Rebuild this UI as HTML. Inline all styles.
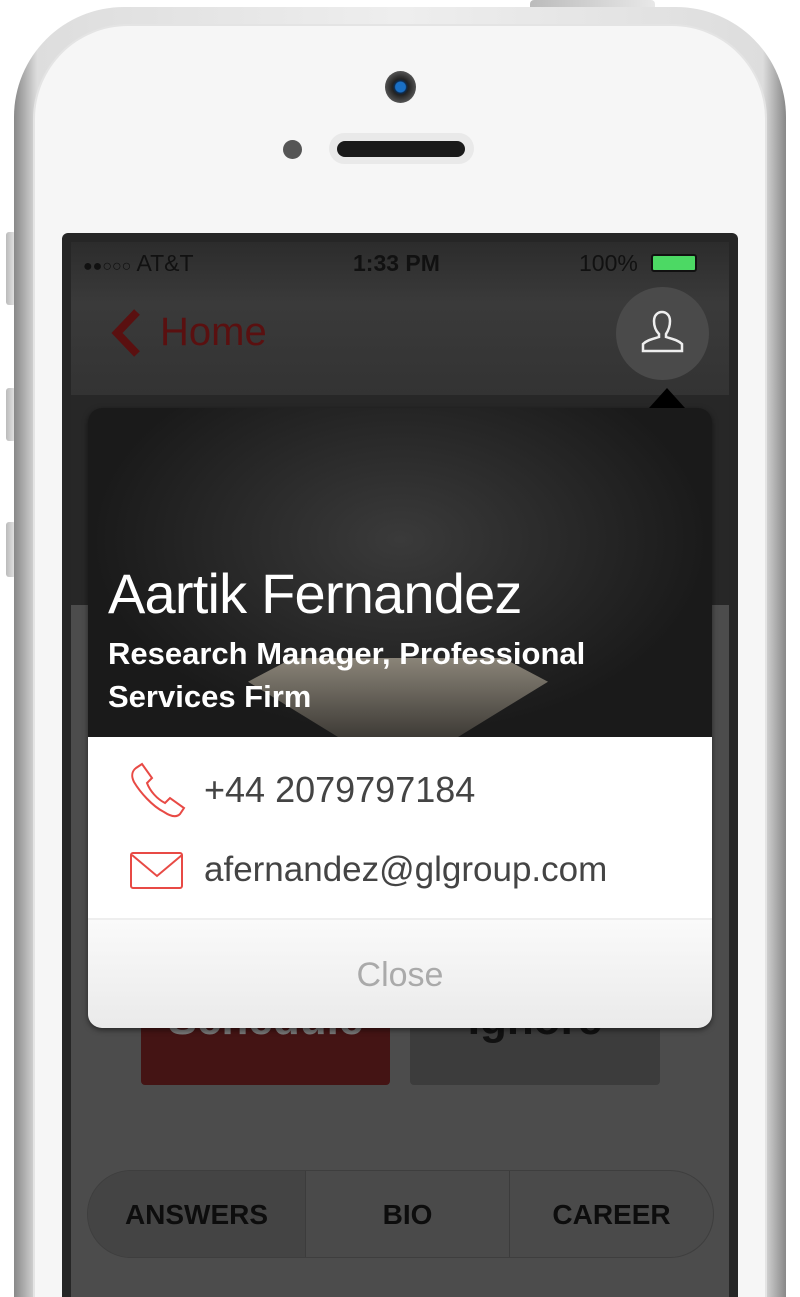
<!DOCTYPE html>
<html><head><meta charset="utf-8"><style>
*{margin:0;padding:0;box-sizing:border-box}
html,body{width:800px;height:1297px;overflow:hidden}
body{background:#fff;position:relative;font-family:"Liberation Sans",sans-serif}
#wrap{position:absolute;left:0;top:0;width:800px;height:1297px;overflow:hidden}
.btn{position:absolute;background:linear-gradient(90deg,#bbb,#e8e8e8);border-radius:3px}
.phone{position:absolute;left:14px;top:7px;width:772px;height:1290px;border-radius:110px 110px 0 0;background:linear-gradient(90deg,#888,#ddd 3%,#eee 50%,#ddd 97%,#888);}
.face{position:absolute;width:734px;height:1273px;border-radius:95px 95px 0 0;background:#f6f6f6;border:2px solid #e4e4e4;border-bottom:none}
.bezel{position:absolute;left:62px;top:233px;width:676px;height:1064px;background:#262626;border-radius:6px 6px 0 0}
.screen{position:absolute;left:71px;top:242px;width:658px;height:1055px;background:#4c4c4c;overflow:hidden}
.abs{position:absolute}
</style></head><body><div id="wrap">
<div class="btn" style="left:530px;top:0;width:125px;height:9px;border-radius:4px 4px 0 0"></div>
<div class="btn" style="left:6px;top:232px;width:10px;height:73px"></div>
<div class="btn" style="left:6px;top:388px;width:10px;height:53px"></div>
<div class="btn" style="left:6px;top:522px;width:10px;height:55px"></div>
<div class="phone"></div>
<div class="face" style="left:33px;top:24px"></div>
<div class="abs" style="left:385px;top:71px;width:31px;height:32px;border-radius:50%;background:radial-gradient(circle,#1a6fc4 0 5px,#0c2c52 6px,#222 8px,#555 16px)"></div>
<div class="abs" style="left:283px;top:140px;width:19px;height:19px;border-radius:50%;background:#555"></div>
<div class="abs" style="left:329px;top:133px;width:145px;height:31px;border-radius:16px;background:#e9e9e9"></div>
<div class="abs" style="left:337px;top:141px;width:128px;height:16px;border-radius:8px;background:#1a1a1a"></div>
<div class="bezel"></div>
<div class="screen">
  <div class="abs" style="left:0;top:0;width:658px;height:153px;background:linear-gradient(#2c2c2c,#3a3a3a 40%,#333)"></div>
  <div class="abs" style="left:0;top:153px;width:658px;height:210px;background:#272727"></div>
  <div class="abs" style="left:12px;top:8px;font-size:23px;color:#111"><span style="font-size:16px">●●○○○</span> AT&amp;T</div>
  <div class="abs" style="left:282px;top:8px;font-size:23px;color:#111;font-weight:bold">1:33 PM</div>
  <div class="abs" style="left:508px;top:8px;font-size:23px;color:#111">100%</div>
  <div class="abs" style="left:580px;top:12px;width:46px;height:18px;border:2px solid #111;border-radius:3px;background:#4cd964"></div>
  <svg class="abs" style="left:36px;top:66px" width="40" height="50" viewBox="0 0 40 50"><path d="M30 4L10 25l20 21" fill="none" stroke="#5a1010" stroke-width="8"/></svg>
  <div class="abs" style="left:89px;top:68px;font-size:40px;color:#5a1010">Home</div>
  <div class="abs" style="left:545px;top:45px;width:93px;height:93px;border-radius:50%;background:#4a4a4a">
    <svg width="93" height="93" viewBox="0 0 93 93"><path d="M38 34c0-12 16-12 16 0c0 6-2 10-4 13v3c6 2 12 3 16 7v7H27v-7c4-4 10-5 16-7v-3c-3-3-5-7-5-13z" fill="none" stroke="#eee" stroke-width="2.5"/></svg>
  </div>
  <div class="abs" style="left:578px;top:146px;width:0;height:0;border-left:18px solid transparent;border-right:18px solid transparent;border-bottom:20px solid #000"></div>
  <div class="abs" style="left:70px;top:758px;width:249px;height:85px;background:#441414;border-radius:4px;color:#777;font-size:44px;font-weight:bold;text-align:center;overflow:hidden;line-height:40px">Schedule</div>
  <div class="abs" style="left:339px;top:758px;width:250px;height:85px;background:#3c3c3c;border-radius:4px;color:#111;font-size:44px;font-weight:bold;text-align:center;overflow:hidden;line-height:40px">Ignore</div>
  <div class="abs" style="left:16px;top:928px;width:627px;height:88px;border-radius:44px;background:#4a4a4a;border:1px solid #3e3e3e;display:flex;font-weight:bold;font-size:28px;color:#0d0d0d">
    <div style="width:218px;line-height:88px;text-align:center;background:#444;border-radius:44px 0 0 44px;border-right:1px solid #3c3c3c">ANSWERS</div>
    <div style="width:204px;line-height:88px;text-align:center;border-right:1px solid #3c3c3c">BIO</div>
    <div style="flex:1;line-height:88px;text-align:center">CAREER</div>
  </div>
</div>
<div class="abs" style="left:88px;top:408px;width:624px;height:620px;border-radius:14px;overflow:hidden;box-shadow:0 2px 6px rgba(0,0,0,.5)">
  <div class="abs" style="left:0;top:0;width:624px;height:329px;background:radial-gradient(ellipse at 50% 40%,#3a3a3a,#1a1a1a 70%)"></div>
  <div class="abs" style="left:160px;top:250px;width:300px;height:79px;background:linear-gradient(#8a8478,#3e3b36);clip-path:polygon(15% 0,85% 0,100% 30%,70% 100%,30% 100%,0 30%)"></div>
  <div class="abs" style="left:20px;top:153px;font-size:56px;color:#fff;letter-spacing:-0.8px">Aartik Fernandez</div>
  <div class="abs" style="left:20px;top:224px;font-size:31px;font-weight:bold;color:#fff;line-height:43px">Research Manager, Professional<br>Services Firm</div>
  <div class="abs" style="left:0;top:329px;width:624px;height:181px;background:#fff"></div>
  <svg class="abs" style="left:40px;top:354px" width="60" height="60" viewBox="0 0 60 60"><path d="M8 6l6-4 10 14-5 5c3 8 10 16 18 20l5-5 14 10-4 6c-4 4-10 2-16-2C24 44 12 30 6 20 3 14 4 9 8 6z" fill="none" stroke="#e84a45" stroke-width="2"/></svg>
  <svg class="abs" style="left:42px;top:444px" width="54" height="38" viewBox="0 0 54 38"><rect x="1" y="1" width="51" height="35" rx="2" fill="none" stroke="#e84a45" stroke-width="2"/><path d="M2 3l25 21 25-21" fill="none" stroke="#e84a45" stroke-width="2"/></svg>
  <div class="abs" style="left:116px;top:361px;font-size:36px;color:#444">+44 2079797184</div>
  <div class="abs" style="left:116px;top:442px;font-size:35px;color:#444">afernandez@glgroup.com</div>
  <div class="abs" style="left:0;top:510px;width:624px;height:110px;background:linear-gradient(#fafafa,#eaeaea);border-top:2px solid #eee;text-align:center;line-height:110px;font-size:34px;color:#aaa">Close</div>
</div>
</div></body></html>
